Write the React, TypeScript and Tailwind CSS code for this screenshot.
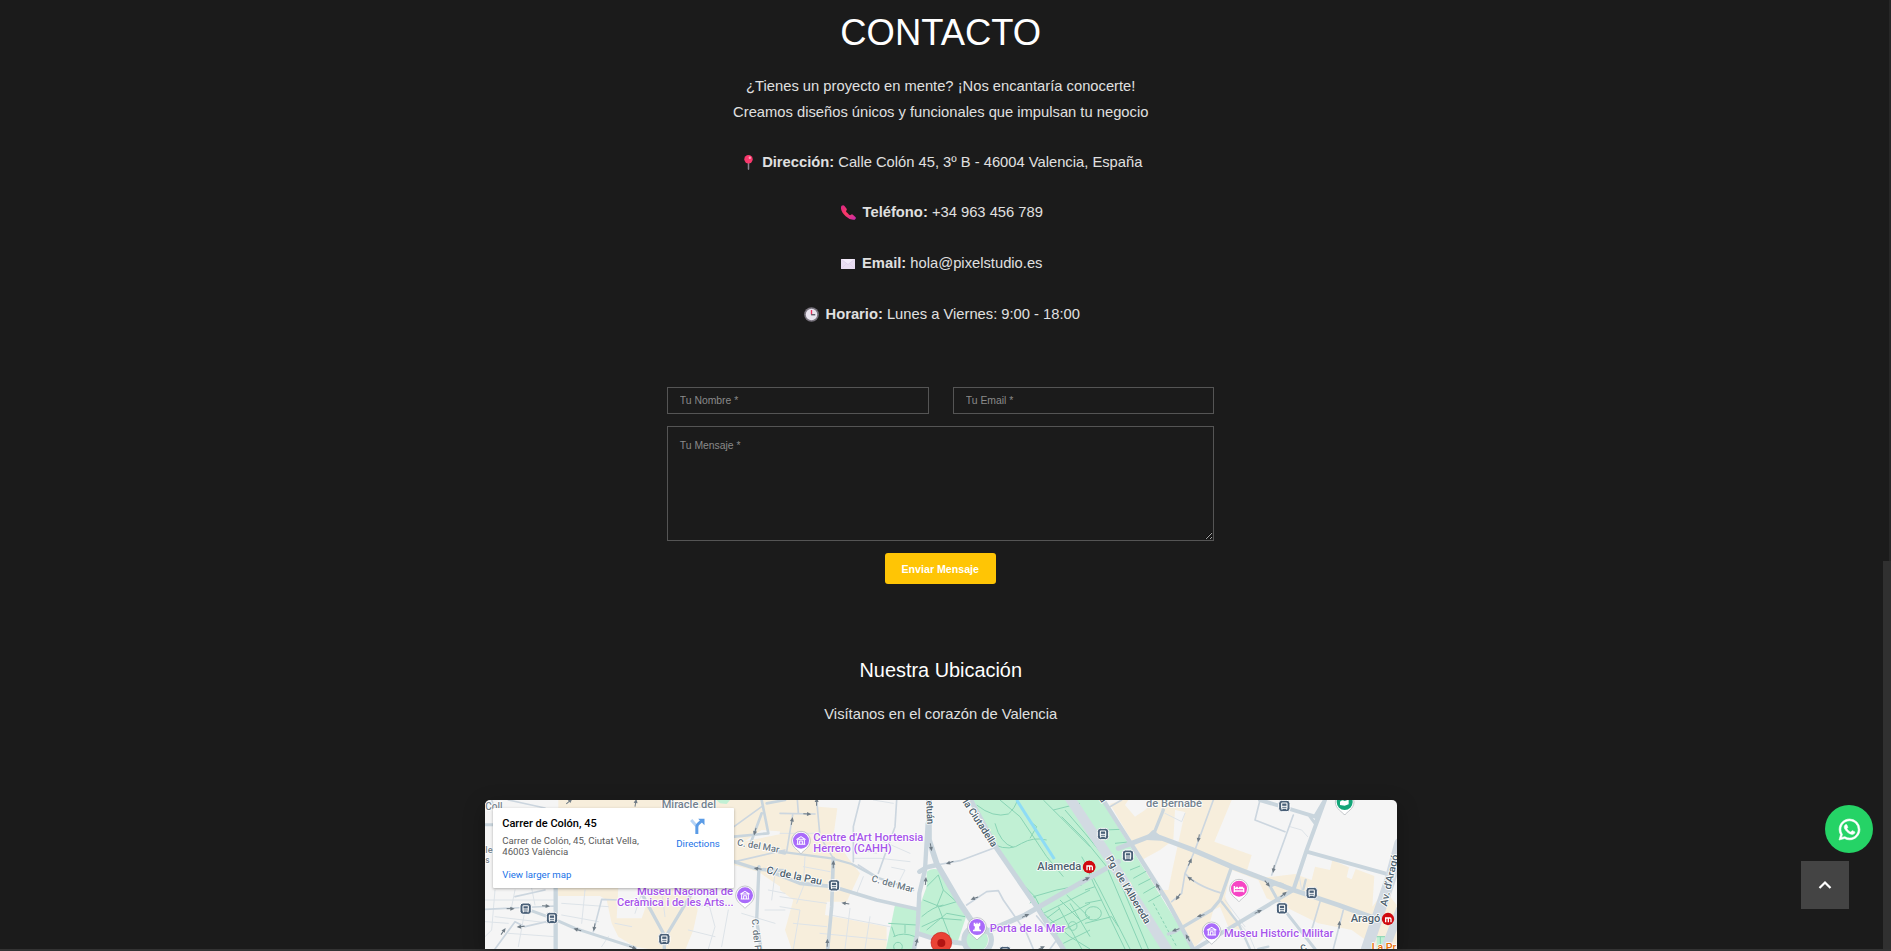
import React from "react";

type Pt = [number, number];

/* Map geometry is authored at three units per CSS pixel. */
const VIEW = "30 30 2736 447";

function Road({ d, w = 12, c = "#c9d5dd" }: { d: string; w?: number; c?: string }) {
  return <path d={d} fill="none" stroke={c} strokeWidth={w} strokeLinejoin="round" strokeLinecap="round" />;
}

function Label({
  x,
  y,
  r = 0,
  size = 30,
  color = "#4d5f6e",
  weight = 500,
  anchor = "start",
  len,
  children,
}: {
  x: number;
  y: number;
  r?: number;
  size?: number;
  color?: string;
  weight?: number;
  anchor?: "start" | "middle" | "end";
  len?: number;
  children: string;
}) {
  return (
    <text
      transform={`translate(${x} ${y}) rotate(${r})`}
      fontFamily="Roboto, sans-serif"
      fontSize={size}
      fontWeight={weight}
      fill={color}
      stroke="#ffffff"
      strokeWidth={5}
      strokeLinejoin="round"
      paintOrder="stroke"
      textAnchor={anchor}
      textLength={len}
      lengthAdjust="spacingAndGlyphs"
    >
      {children}
    </text>
  );
}

function Stop({ x, y }: { x: number; y: number }) {
  return (
    <g transform={`translate(${x} ${y})`}>
      <rect x={-17} y={-17} width={34} height={34} rx={9} fill="#4a6078" stroke="#fff" strokeWidth={3} />
      <rect x={-8} y={-9} width={16} height={16} rx={2} fill="none" stroke="#fff" strokeWidth={3.2} />
      <path d="M-8 1H8M-7 7v4M7 7v4" stroke="#fff" strokeWidth={3} />
    </g>
  );
}

function Arrow({ x, y, r }: { x: number; y: number; r: number }) {
  return (
    <g transform={`translate(${x} ${y}) rotate(${r})`}>
      <path d="M-12 0H2" stroke="#6f7b85" strokeWidth={3} />
      <path d="M-1 -6L12 0L-1 6Z" fill="#6f7b85" />
    </g>
  );
}

function Pin({ x, y, color, children }: { x: number; y: number; color: string; children?: React.ReactNode }) {
  return (
    <g transform={`translate(${x} ${y})`}>
      <path
        d="M0 38C-5 30-28 20-28 -1A28 28 0 0 1 28 -1C28 20 5 30 0 38Z"
        fill="#fff"
        stroke="#a9adb3"
        strokeWidth={2}
      />
      <circle r={24} cy={-1} fill={color} />
      {children}
    </g>
  );
}

function Museum() {
  return (
    <g fill="none" stroke="#fff" strokeWidth={3.2} strokeLinejoin="round">
      <path d="M-13 -5L0 -13L13 -5Z" />
      <path d="M-10 -4V9M10 -4V9M-13 10H13M-4 9V0H4V9" />
    </g>
  );
}

function Metro({ x, y }: { x: number; y: number }) {
  return (
    <g transform={`translate(${x} ${y})`}>
      <circle r={18.5} fill="#d00a10" />
      <path d="M-7 10V-3H1V10M1 -3H6Q9 -3 9 1V10" fill="none" stroke="#fff" strokeWidth={4} />
    </g>
  );
}

const arrowsA: [number, number, number][] = [
  [107, 356, 0], [213, 348, 5], [137, 410, 175], [85, 424, -55], [307, 419, 197],
  [358, 412, 100], [474, 473, 20], [840, 125, 105], [848, 236, 190], [283, 34, -40], [482, 38, -80],
];
const arrowsB: [number, number, number][] = [
  [110, 35, -88], [82, 72, 3], [36, 93, -80], [160, 223, -88], [196, 340, 190], [142, 458, -88],
  [453, 172, 80], [509, 218, 160], [437, 273, -85], [583, 325, 160], [737, 377, -25],
  [410, 456, -75], [784, 474, -25], [919, 267, -25],
];
const arrowsC: [number, number, number][] = [
  [341, 145, 100], [315, 216, -65], [317, 267, 215], [279, 321, 125], [347, 377, 165],
  [219, 290, -120], [272, 420, 160], [308, 443, -120], [566, 237, 100], [547, 281, 50],
  [596, 313, -40], [520, 365, -25], [763, 404, -85],
];

const trees: Pt[] = [[354, 470], [878, 408]];

function MapCanvas() {
  return (
    <svg viewBox={VIEW} className="block h-[149px] w-[912px] tracking-normal" preserveAspectRatio="none">
      <rect x={0} y={0} width={2800} height={500} fill="#f5f5f5" />

      {/* built-up blocks */}
      <g fill="#f7eedc">
        <path d="M250 30L535 30L535 66L470 66L470 54L250 54ZM535 30H930V125L860 120L800 160L777 200V54H535Z" />
        <path d="M777 160L930 130V300L850 245L777 225Z" />
        <path d="M246 290H430L425 385L500 385L530 300L640 294L668 360L655 420L632 477H520L480 470L430 440L410 400L395 330L375 318L250 318Z" />
        <g transform="translate(915 0)">
          <path d="M0 30H115V50L172 55L160 140L205 205L240 250L200 335H140L135 375L320 410V477H35L15 420L40 330L0 300Z" />
        </g>
        <g transform="translate(1830 0)">
          <path d="M75 42L110 30H440L388 155L500 195L485 245L545 262L630 252L680 270L690 230L735 240L742 210L792 232L785 262L800 268L812 237L868 258L862 350L900 300L935 345V477H880L800 420L700 400L600 350L545 325L520 270L440 240L420 320L465 420L400 400L330 470L240 330L190 260L165 200L150 170Z" />
        </g>
      </g>
      <g fill="#f5f5f5" transform="translate(1830 0)">
        <path d="M120 45L150 80L180 60L210 30H130ZM270 60L300 66L262 240L250 300L225 300L170 210L225 180L265 150ZM385 360L405 350L430 410L400 440L370 415Z" />
      </g>

      {/* parks */}
      <g fill="#c1f0d4">
        <path d="M725 30H765L755 42L735 40Z" />
        <g transform="translate(915 0)">
          <path d="M575 30H880L1240 477H850L735 300L650 170Z" />
          <path d="M440 245Q455 232 478 240L560 375L545 420L530 465L420 428L420 345L440 290Z" />
          <path d="M345 345L415 360V430L405 477H318Z" />
          <circle cx={590} cy={450} r={34} />
        </g>
        <g transform="translate(1830 0)">
          <path d="M-40 30H50L325 477H230Z" />
          <path d="M875 440H900V477H875Z" />
        </g>
      </g>

      {/* park paths */}
      <g fill="none" stroke="#88d3b4" strokeWidth={3}>
        <g transform="translate(915 0)">
          <path d="M590 45Q640 85 685 72Q705 55 712 30M645 165Q690 185 725 160Q760 140 800 150M645 100Q660 160 700 172M660 30L720 80L800 200L850 260M790 30L870 110L930 170M745 90L770 110L750 145M820 60L900 40M735 290L765 320L750 340M760 320L830 300L905 285M765 320L790 370L870 440L930 477M790 370L930 300M810 400L930 340M830 430L930 380M850 460L930 420M840 330L900 390M860 315L930 385M835 350L905 477M870 340L930 440M800 385L840 355" />
          <path d="M440 290L475 255L490 300L540 345M430 330L480 350L530 335M425 380Q460 350 490 345M425 410L480 385L545 390M475 350L510 440M440 420L500 370L555 380M490 300L470 350M325 400L410 405M340 440Q370 425 405 440M335 410L345 440M375 405V430" />
        </g>
        <g transform="translate(1830 0)">
          <path d="M-60 60L0 130L90 240L190 477M-70 80L0 150L65 230L170 477M-10 200L40 290L135 477M0 220L30 290L120 477M0 300L30 290M0 340L50 330M0 400L80 380L100 410M60 120L105 118M90 160L140 155M135 240L165 228M145 265L190 240M160 285L205 262M175 310L218 285M190 335L235 310" />
          <ellipse cx={25} cy={370} rx={24} ry={20} />
          <path d="M205 340L275 470" strokeDasharray="9 6" />
          <path d="M872 440H900M886 440V470" />
        </g>
        {trees.map(([x, y]) => (
          <circle key={x} cx={x + 915} cy={y} r={13} />
        ))}
      </g>
      <path d="M1625 30L1738 207" stroke="#8edcf5" strokeWidth={9} />

      {/* lanes */}
      <g>
        <Road w={3} c="#dde3e8" d="M30 330H240M60 300L50 420L30 440M120 300L110 350M170 295L180 345M60 380L230 400M100 430L240 440M150 360L130 470M30 395L100 400M260 340L400 350M330 300L320 400M260 375L370 395M400 440L380 470M420 400L470 410M500 310L480 370M560 300L570 380M640 420L720 440M690 300L720 410L700 477M760 360L740 470M620 340L700 350M800 370L900 400M880 300L930 310M870 360H930M900 250L890 330" />
        <g transform="translate(915 0)">
          <Road w={3} c="#dde3e8" d="M0 350L60 360L40 477M75 200L70 290L50 340M70 230L150 245M0 320L140 340M150 375L330 410M210 355L195 477M270 380L255 477M40 400L140 410M120 430L320 450M220 205H300L390 215M300 150L390 190M240 180L290 190M335 232L375 240L350 290M250 260L230 310M0 130H110M280 30L340 40" />
        </g>
        <g transform="translate(1830 0)">
          <Road w={3} c="#dde3e8" d="M240 70L290 95L300 70M615 110L650 120L668 140M640 240L650 300M410 340L490 430L510 477M420 330L480 410M240 30L230 60" />
        </g>
        <Road w={5} c="#ccd6df" d="M30 358L240 348M240 348L240 390M60 477L120 395L150 410L215 395M120 320L210 300M355 425L380 328L430 330M50 30L80 110M100 30L210 54M780 215L930 180M777 110L860 50" />
        <g transform="translate(915 0)">
          <Road w={5} c="#ccd6df" d="M52 30L55 68M0 70L105 72M38 75L20 185M110 30L120 140L160 205M220 110L240 30M220 110V215M350 30L345 110L295 250M640 175L540 212L470 225M560 345L620 305L655 302L670 330L740 430L760 477M235 225L290 260M770 378L830 450L810 477" />
        </g>
        <g transform="translate(1830 0)">
          <Road w={5} c="#ccd6df" d="M385 30L330 180L300 250L290 310L260 335M300 250Q330 285 405 308M525 30L510 90L600 125M625 75L560 255M775 360L745 477M705 335L680 420M110 30L75 50" />
          <Road w={7} d="M410 335L460 400L495 477M550 470L520 477M655 298L662 270" />
        </g>
      </g>

      {/* streets */}
      <Road w={13} d="M242 290V477" />
      <Road w={9} d="M150 355L232 385L300 415L480 473M30 104H60" />
      <Road w={10} d="M500 310L568 435V477M650 310L575 435M777 215L850 238L930 242M852 230L845 390L858 477" />
      <Road w={8} d="M930 30L875 40M777 140L880 130L860 30M860 70L825 165M880 180L930 190" />
      <g transform="translate(915 0)">
        <Road w={7} d="M0 185L155 205L215 222L290 262L400 300" />
        <Road w={11} d="M-40 240L60 280L160 290L290 330L410 357" />
        <Road w={11} d="M160 205L155 350L143 477" />
        <Road w={13} d="M443 100L435 240L418 310L412 430L402 477" />
        <Road w={17} d="M447 30V150L470 220L540 340L590 415" />
        <Road w={14} d="M418 245L440 232L470 225M412 430L480 452L550 460" />
        <Road w={15} d="M545 -20L650 175L770 350L850 477" />
        <Road w={15} d="M620 425L735 375L930 262L1015 215" />
        <circle cx={593} cy={450} r={41} fill="none" stroke="#c9d5dd" strokeWidth={16} />
      </g>
      <g transform="translate(1830 0)">
        <Road w={30} c="#d2dae2" d="M-55 10L70 200L245 477" />
        <Road w={13} d="M45 15L150 180L245 330L325 477" />
        <Road w={15} d="M100 175L205 135L320 178L440 230L545 270L625 300L760 345L870 385" />
        <Road w={10} d="M205 135L235 60M205 125L185 145L228 147ZM440 230L405 330L380 360L270 425L250 432" />
        <Road w={12} d="M525 30L690 80L720 30M720 30L665 180L625 300L500 375L330 477M665 185L900 250" />
        <Road w={9} d="M675 80L690 100L700 72M545 270L575 325L610 375L690 477M555 290Q580 270 605 292" />
        <Road w={34} c="#d2dae2" d="M945 160L915 270L845 477" />
        <Road w={26} c="#d2dae2" d="M945 360L900 477" />
      </g>

      {arrowsA.map(([x, y, r]) => <Arrow key={`a${x}`} x={x} y={y} r={r} />)}
      {arrowsB.map(([x, y, r]) => <Arrow key={`b${x}`} x={x + 915} y={y} r={r} />)}
      {arrowsC.map(([x, y, r]) => <Arrow key={`c${x}`} x={x + 1830} y={y} r={r} />)}

      {/* west labels */}
      <Label x={31} y={60} color="#7b8791">Coll</Label>
      <Label x={31} y={188} size={27} color="#7b8791">le</Label>
      <Label x={31} y={220} size={25} color="#7b8791">s</Label>
      <Label x={560} y={55} size={32} len={163} color="#74828e">Miracle del</Label>
      <Label x={785} y={166} r={10} size={28} len={128} color="#6b7882">C. del Mar</Label>
      <Label x={873} y={250} r={12} size={31} len={169}>C/ de la Pau</Label>
      <Label x={830} y={388} r={84} size={28} color="#6b7882">C. del P</Label>
      <Label x={774} y={314} size={32} len={288} anchor="end" color="#a655ea">Museu Nacional de</Label>
      <Label x={776} y={349} size={32} len={350} anchor="end" color="#a655ea">Ceràmica i de les Arts...</Label>
      <Stop x={152} y={356} />
      <Stop x={231} y={384} />
      <Stop x={568} y={447} />
      <Pin x={810} y={317} color="#a96bfa"><Museum /></Pin>

      {/* centre labels */}
      <g transform="translate(915 0)">
        <Label x={100} y={152} size={32} len={330} color="#a655ea">Centre d'Art Hortensia</Label>
        <Label x={100} y={185} size={32} len={235} color="#a655ea">Herrero (CAHH)</Label>
        <Label x={273} y={274} r={15} size={28} len={130} color="#6b7882">C. del Mar</Label>
        <Label x={439} y={32} r={88} size={30} len={71}>etuán</Label>
        <Label x={547} y={36} r={57} size={30} len={164}>la Ciutadella</Label>
        <Label x={904} y={241} size={33} len={132} anchor="end">Alameda</Label>
        <Label x={629} y={427} size={33} len={227} color="#a655ea">Porta de la Mar</Label>
        <Stop x={162} y={286} />
        <Stop x={675} y={486} />
        <Pin x={63} y={153} color="#a96bfa"><Museum /></Pin>
        <Pin x={591} y={412} color="#a96bfa">
          <path d="M-10 -14h5v4h3v-4h4v4h3v-4h5v9l-4 3 2 9h4v5h-24v-5h4l2-9-4-3z" fill="#fff" />
        </Pin>
        <Metro x={927} y={231} />
        <circle cx={484} cy={458} r={31} fill="#ea4335" stroke="#c5221f" strokeWidth={2} />
        <circle cx={484} cy={459} r={12} fill="#b31412" />
      </g>

      {/* east labels */}
      <g transform="translate(1830 0)">
        <Label x={183} y={50} size={32} len={168} color="#74828e">de Bernabé</Label>
        <Label x={42} y={26} r={58} size={29}>a</Label>
        <Label x={62} y={205} r={59} size={30} len={232}>Pg. de l'Albereda</Label>
        <Label x={905} y={350} r={-77} size={30} len={158}>Av. d'Aragó</Label>
        <Label x={886} y={397} size={33} len={89} anchor="end">Aragó</Label>
        <Label x={417} y={440} size={33} len={328} color="#a655ea">Museu Històric Militar</Label>
        <Label x={860} y={484} size={32} color="#e8710a">La Pr</Label>
        <Label x={650} y={486} r={-20} size={28}>C</Label>
        <Stop x={54} y={132} />
        <Stop x={129} y={197} />
        <Stop x={598} y={48} />
        <Stop x={680} y={309} />
        <Stop x={591} y={355} />
        <Metro x={13} y={231} />
        <Metro x={909} y={387} />
        <Pin x={462} y={297} color="#f645c4">
          <path d="M-14 -9V10M14 10V-2H-14M-14 6H14" stroke="#fff" strokeWidth={4} fill="none" />
          <path d="M-10 -7h7v8h-7zM0 -7h12v8H0z" fill="#fff" />
        </Pin>
        <Pin x={380} y={425} color="#a96bfa"><Museum /></Pin>
        <Pin x={779} y={37} color="#13a578">
          <path d="M-14 -2Q-8 -10 0 -4L12 -8V6L0 10L-14 8Z" fill="#fff" />
        </Pin>
      </g>
    </svg>
  );
}

function PinEmoji() {
  return (
    <svg viewBox="0 0 20 20" className="mr-[6px] inline-block size-[15px]">
      <path d="M9 9h2v10q-1 2-2 0z" fill="#8a8290" />
      <circle cx="10" cy="5.7" r="5.6" fill="#f8386c" />
      <circle cx="11.8" cy="3.6" r="1.6" fill="#ff9fb5" />
    </svg>
  );
}

function PhoneEmoji() {
  return (
    <svg viewBox="0 0 24 24" className="mr-[7px] inline-block size-[15px]">
      <defs>
        <linearGradient id="phone" x1="0" y1="0" x2="1" y2="1">
          <stop offset="0" stopColor="#d6268a" />
          <stop offset=".45" stopColor="#fb3a62" />
          <stop offset="1" stopColor="#c52ab0" />
        </linearGradient>
      </defs>
      <path
        d="M1 1Q4-1 6 2L9 6Q10 8 8 9.500Q8 11 10 12.500L13 15.500Q14.500 17 16 15.500Q17.500 14 19 15.500L23 19Q25 21.500 22 23.500Q15 25 7.500 18Q-1 10 0 3Q0 2 1 1Z"
        fill="url(#phone)"
      />
    </svg>
  );
}

function MailEmoji() {
  return (
    <svg viewBox="0 0 14 10" className="mr-[7px] inline-block h-[10px] w-[14px]">
      <rect width="14" height="10" fill="#e9def2" />
      <path d="M0 0L7 5.500L14 0" fill="#f3ebfa" stroke="#d3c1e2" strokeWidth=".5" />
      <path d="M0 10L5.500 4.500M14 10L8.500 4.500" stroke="#dccbe8" strokeWidth=".5" />
    </svg>
  );
}

function ClockEmoji() {
  return (
    <svg viewBox="0 0 20 20" className="mr-[7px] inline-block size-[15px]">
      <circle cx="10" cy="10" r="9.800" fill="#78737d" />
      <circle cx="10" cy="10" r="7.600" fill="#e9e4ee" />
      <path d="M10 4v6" stroke="#e8325e" strokeWidth="1.800" />
      <path d="M9.500 10.300H15" stroke="#5c5664" strokeWidth="1.800" />
    </svg>
  );
}

function InfoRow({ icon, label, value }: { icon: React.ReactNode; label: string; value: string }) {
  return (
    <div className="flex h-[25.2px] items-center">
      {icon}
      <p>
        <b>{label}</b> {value}
      </p>
    </div>
  );
}

function PlaceCard() {
  return (
    <div className="absolute top-2 left-2 flex h-20 w-[241px] justify-between rounded-[1px] bg-white pr-[14px] pl-[9.5px] font-['Roboto',sans-serif] tracking-normal shadow-[0_1px_3px_rgba(0,0,0,0.3)]">
      <div className="pt-[9px]">
        <div className="text-[11px] leading-[13px] font-medium text-black">Carrer de Colón, 45</div>
        <div className="mt-[5px] text-[9.65px] leading-[11px] whitespace-nowrap text-[#5b5b5b]">
          Carrer de Colón, 45, Ciutat Vella,
          <br />
          46003 València
        </div>
        <div className="mt-[12px] text-[9.65px] leading-[11px] text-[#1a73e8]">View larger map</div>
      </div>
      <div className="flex flex-col items-center pt-[10px] text-[9.7px] leading-[11px] text-[#1a73e8]">
        <svg viewBox="0 0 44 48" className="mb-[4px] h-4 w-[15px]">
          <path d="M3 6L19 24" stroke="#b5d3f5" strokeWidth="9" />
          <path d="M20 48V28Q20 21 25 17L34 9" fill="none" stroke="#5a9be6" strokeWidth="9" />
          <path d="M24 2H43V22Z" fill="#5a9be6" />
        </svg>
        Directions
      </div>
    </div>
  );
}

export default function App() {
  return (
    <div className="flex h-[951px] flex-col overflow-hidden bg-[#1b1b1b] font-['Liberation_Sans',Arial,sans-serif] text-white">
      <div className="flex h-[949px]">
        <main className="flex w-[1883px] shrink-0 flex-col items-center pt-[11px] pr-[1.5px] text-[14.74px] leading-[25.3px] text-[#e0e0e0]">
          <h1 className="h-[44px] text-[36.4px] leading-[44px] text-white">CONTACTO</h1>
          <div className="mt-[17.6px] text-center leading-[26px]">
            <p>¿Tienes un proyecto en mente? ¡Nos encantaría conocerte!</p>
            <p>Creamos diseños únicos y funcionales que impulsan tu negocio</p>
          </div>
          <div className="mt-[25px] flex flex-col items-center gap-[25.5px] pl-[2px]">
            <InfoRow icon={<PinEmoji />} label="Dirección:" value="Calle Colón 45, 3º B - 46004 Valencia, España" />
            <InfoRow icon={<PhoneEmoji />} label="Teléfono:" value="+34 963 456 789" />
            <InfoRow icon={<MailEmoji />} label="Email:" value="hola@pixelstudio.es" />
            <InfoRow icon={<ClockEmoji />} label="Horario:" value="Lunes a Viernes: 9:00 - 18:00" />
          </div>

          <form className="mt-[60.1px] mr-[1px] flex w-[547px] flex-col items-center gap-3">
            <div className="flex w-full justify-between">
              <input
                placeholder="Tu Nombre *"
                className="h-[27px] w-[262px] border border-[#555] bg-transparent px-3 text-[10.4px] placeholder:text-[#8a8a8a]"
              />
              <input
                placeholder="Tu Email *"
                className="h-[27px] w-[261px] border border-[#555] bg-transparent px-3 text-[10.4px] placeholder:text-[#8a8a8a]"
              />
            </div>
            <textarea
              placeholder="Tu Mensaje *"
              className="block h-[115px] w-full resize border border-[#555] bg-transparent px-3 pt-3 text-[10.4px] leading-[14px] placeholder:text-[#8a8a8a]"
            />
            <button
              type="button"
              className="h-[31px] w-[111px] rounded-[3px] bg-[#ffc505] text-[10.65px] leading-[32px] font-bold text-white"
            >
              Enviar Mensaje
            </button>
          </form>

          <h2 className="mt-[71px] h-[30px] text-[19.9px] leading-[30px] text-white">Nuestra Ubicación</h2>
          <p className="mt-[17px]">Visítanos en el corazón de Valencia</p>

          <section className="relative mt-auto h-[149px] w-[912px] shadow-[0_7px_20px_rgba(0,0,0,0.3)]">
            <div className="overflow-hidden rounded-t-[5px]">
              <MapCanvas />
            </div>
            <PlaceCard />
          </section>
        </main>
        <div className="flex w-2 flex-col items-end">
          <div className="h-[561px] w-[2px] bg-[#272727]" />
          <div className="w-2 grow bg-[#303030]" />
        </div>
      </div>
      <div className="h-[2px] bg-[#333]" />

      <a className="fixed top-[805px] left-[1825px] flex size-12 items-center justify-center rounded-full bg-[#25d366]">
        <svg viewBox="0 0 24 24" className="size-[21px] overflow-visible" fill="#fff" stroke="#fff" strokeWidth="0.7">
          <path d="M17.472 14.382c-.297-.149-1.758-.867-2.030-.967-.273-.099-.471-.148-.67.150-.197.297-.767.966-.940 1.164-.173.199-.347.223-.644.075-.297-.150-1.255-.463-2.390-1.475-.883-.788-1.480-1.761-1.653-2.059-.173-.297-.018-.458.130-.606.134-.133.298-.347.446-.520.149-.174.198-.298.298-.497.099-.198.050-.371-.025-.520-.075-.149-.669-1.612-.916-2.207-.242-.579-.487-.500-.669-.510-.173-.008-.371-.010-.570-.010-.198 0-.520.074-.792.372-.272.297-1.040 1.016-1.040 2.479 0 1.462 1.065 2.875 1.213 3.074.149.198 2.096 3.200 5.077 4.487.709.306 1.262.489 1.694.625.712.227 1.360.195 1.871.118.571-.085 1.758-.719 2.006-1.413.248-.694.248-1.289.173-1.413-.074-.124-.272-.198-.570-.347z" />
          <path fillRule="evenodd" d="M12.050 0C5.495 0 .160 5.335.157 11.892c0 2.096.547 4.142 1.588 5.945L.057 24l6.305-1.654a11.882 11.882 0 005.683 1.448h.005c6.554 0 11.890-5.335 11.893-11.893A11.821 11.821 0 0012.050 0zm0 21.785h-.004a9.870 9.870 0 01-5.031-1.378l-.361-.214-3.741.982.998-3.648-.235-.374a9.860 9.860 0 01-1.510-5.260c.001-5.450 4.436-9.884 9.888-9.884 2.640 0 5.122 1.030 6.988 2.898a9.825 9.825 0 012.893 6.994c-.003 5.450-4.437 9.884-9.885 9.884z" />
        </svg>
      </a>
      <button
        type="button"
        aria-label="Subir"
        className="fixed top-[861px] left-[1801px] flex size-12 items-center justify-center bg-[#444]"
      >
        <svg viewBox="0 0 14 10" className="h-[10px] w-[14px]">
          <path d="M1.500 8L7 2.500L12.500 8" fill="none" stroke="#fff" strokeWidth="2.200" />
        </svg>
      </button>
    </div>
  );
}
